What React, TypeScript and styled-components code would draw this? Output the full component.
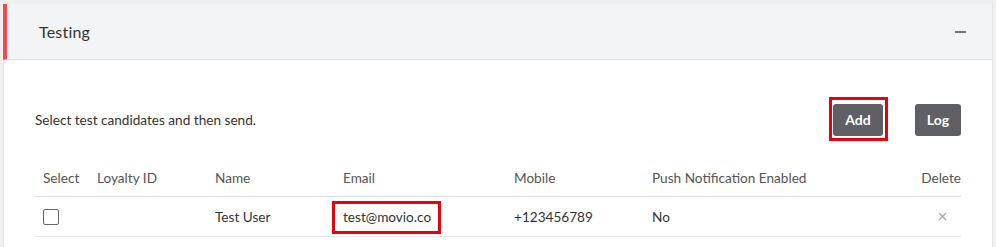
import React from "react";
import styled, { createGlobalStyle } from "styled-components";

const Global = createGlobalStyle`
  html, body { margin: 0; padding: 0; background: #eeefef; }
  body { font-family: Lato, "Noto Sans", sans-serif; color: #333; }
  * { box-sizing: border-box; }
`;

const Page = styled.div`
  padding: 4px 3px 0 3px;
  width: 996px;
  height: 247px;
  overflow: hidden;
`;

const Panel = styled.section`
  width: 990px;
  background: #fff;
  border: 1px solid #e2e3e4;
  border-top: none;
`;

const Header = styled.header`
  height: 56px;
  display: flex;
  align-items: center;
  justify-content: space-between;
  background: #f3f4f6;
  border-left: 4px solid #f5474c;
  border-bottom: 1px solid #dcdcdc;
  margin-left: -1px;
  padding: 0 26px 0 32px;
`;

const Title = styled.h2`
  margin: 0;
  font-size: 16px;
  line-height: 20px;
  font-weight: 400;
  color: #333;
  letter-spacing: 0.2px;
`;

const Collapse = styled.span`
  display: block;
  width: 11px;
  height: 2px;
  background: #777;
`;

const Body = styled.div`
  padding: 44px 31px 40px 31px;
`;

const Toolbar = styled.div`
  display: flex;
  align-items: center;
  height: 32px;
  margin-bottom: 24px;
`;

const Intro = styled.p`
  flex: 1;
  margin: 0;
  font-size: 13.6px;
  line-height: 20px;
  color: #333;
`;

const Button = styled.button<{ $highlight?: boolean; $w: number }>`
  position: relative;
  width: ${(p) => p.$w}px;
  height: 32px;
  margin-left: 32px;
  border: none;
  border-radius: 3px;
  background: #5f6063;
  color: #fff;
  font-family: Lato, "Noto Sans", sans-serif;
  font-size: 14px;
  line-height: 20px;
  font-weight: 700;
  padding: 0;
  ${(p) =>
    p.$highlight &&
    `&::after {
      content: "";
      position: absolute;
      left: -4px; top: -7px; right: -5px; bottom: -5px;
      border: 3px solid #e8000c;
    }`}
`;

const Grid = styled.div`
  display: grid;
  grid-template-columns: 54px 118px 128px 171px 138px 1fr 60px;
`;

const HeadCell = styled.div<{ $right?: boolean }>`
  height: 37px;
  padding: 8px ${(p) => (p.$right ? "0" : "8px")} 0 8px;
  font-size: 13.6px;
  color: #555;
  line-height: 20px;
  border-bottom: 1px solid #dcdcdc;
  text-align: ${(p) => (p.$right ? "right" : "left")};
  white-space: nowrap;
`;

const Cell = styled.div<{ $right?: boolean }>`
  height: 40px;
  display: flex;
  align-items: center;
  justify-content: ${(p) => (p.$right ? "flex-end" : "flex-start")};
  padding: 0 ${(p) => (p.$right ? "14px" : "8px")} 0 8px;
  font-size: 13.6px;
  line-height: 20px;
  font-weight: 400;
  color: #333;
  border-bottom: 1px solid #e4e4e4;
  white-space: nowrap;
`;

const Checkbox = styled.span`
  display: block;
  width: 16px;
  height: 16px;
  border: 1px solid #666;
  border-radius: 2px;
  background: #fff;
`;

const Marked = styled.span`
  position: relative;
  &::after {
    content: "";
    position: absolute;
    left: -11px; top: -6px; right: -10px; bottom: -7px;
    border: 3px solid #e8000c;
  }
`;

const DeleteX = styled.svg`
  width: 9px;
  height: 9px;
`;

export default function App() {
  return (
    <>
      <Global />
      <Page>
        <Panel>
          <Header>
            <Title>Testing</Title>
            <Collapse />
          </Header>
          <Body>
            <Toolbar>
              <Intro>Select test candidates and then send.</Intro>
              <Button $highlight $w={50}>Add</Button>
              <Button $w={46}>Log</Button>
            </Toolbar>
            <Grid>
              <HeadCell>Select</HeadCell>
              <HeadCell>Loyalty ID</HeadCell>
              <HeadCell>Name</HeadCell>
              <HeadCell>Email</HeadCell>
              <HeadCell>Mobile</HeadCell>
              <HeadCell>Push Notification Enabled</HeadCell>
              <HeadCell $right>Delete</HeadCell>
              <Cell><Checkbox /></Cell>
              <Cell></Cell>
              <Cell>Test User</Cell>
              <Cell><Marked>test@movio.co</Marked></Cell>
              <Cell>+123456789</Cell>
              <Cell>No</Cell>
              <Cell $right>
                <DeleteX viewBox="0 0 9 9">
                  <path d="M1 1 L8 8 M8 1 L1 8" stroke="#aaa" strokeWidth="1.4" fill="none" />
                </DeleteX>
              </Cell>
            </Grid>
          </Body>
        </Panel>
      </Page>
    </>
  );
}
